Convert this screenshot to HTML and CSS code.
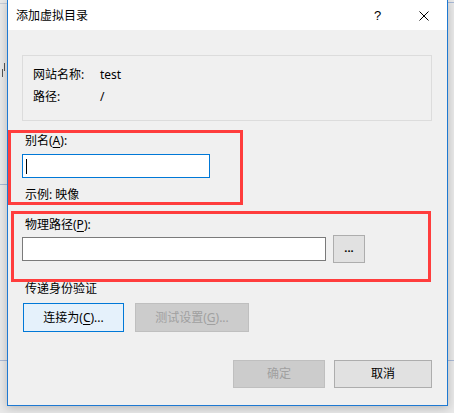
FILE: index.html
```html
<!DOCTYPE html>
<html lang="zh-CN">
<head>
<meta charset="utf-8">
<title>添加虚拟目录</title>
<link rel="stylesheet" href="styles.css">
</head>
<body>
<div class="desktop">
  <div class="bg-line bg-l1"></div>
  <div class="bg-line bg-l2"></div>
  <div class="bg-line bg-l3"></div>
  <div class="bg-line bg-r1"></div>
  <div class="bg-line bg-r2"></div>
  <div class="bg-mark"></div>

  <div class="dialog">
    <div class="titlebar">
      <span class="title">添加虚拟目录</span>
      <span class="help">?</span>
      <svg class="close" width="10" height="10" viewBox="0 0 10 10">
        <path d="M0.5 0.5 L9.5 9.5 M9.5 0.5 L0.5 9.5" stroke="#000" stroke-width="1" fill="none"/>
      </svg>
    </div>
    <div class="content">
      <div class="group">
        <div class="info-row"><span class="info-label">网站名称:</span><span class="info-value">test</span></div>
        <div class="info-row"><span class="info-label">路径:</span><span class="info-value">/</span></div>
      </div>

      <div class="label alias-label">别名(<u>A</u>):</div>
      <div class="textbox focused"><span class="caret"></span></div>
      <div class="label example">示例: 映像</div>

      <div class="label path-label">物理路径(<u>P</u>):</div>
      <div class="path-row">
        <div class="textbox path-box"></div>
        <div class="btn browse">...</div>
      </div>

      <div class="label auth-label">传递身份验证</div>
      <div class="auth-row">
        <div class="btn btn-connect">连接为(<u>C</u>)...</div>
        <div class="btn disabled btn-test">测试设置(<u>G</u>)...</div>
      </div>

      <div class="footer">
        <div class="btn disabled btn-ok">确定</div>
        <div class="btn btn-cancel">取消</div>
      </div>

      <div class="mark mark-1"></div>
      <div class="mark mark-2"></div>
    </div>
  </div>
</div>
</body>
</html>
```

FILE: styles.css
```css
* { box-sizing: border-box; }

html, body {
  margin: 0;
  padding: 0;
  width: 454px;
  height: 413px;
  overflow: hidden;
}

body {
  background: #e9e9e9;
  font-family: "Noto Sans", "Noto Sans CJK SC", sans-serif;
  font-size: 12px;
  color: #000;
}

.desktop {
  position: relative;
  width: 454px;
  height: 413px;
}

.bg-line {
  position: absolute;
  height: 1px;
  background: #a9b9d6;
}
.bg-l1 { left: 0; width: 7px; top: 3px; background: #c5ccd8; }
.bg-l2 { left: 0; width: 7px; top: 184px; }
.bg-l3 { left: 0; width: 7px; top: 360px; }
.bg-r1 { left: 447px; width: 7px; top: 2px; }
.bg-r2 { left: 447px; width: 7px; top: 360px; }
.bg-mark {
  position: absolute;
  left: 4px;
  top: 63px;
  width: 1px;
  height: 8px;
  background: #555;
  box-shadow: -2px 6px 0 0 #555;
}

.dialog {
  position: absolute;
  left: 7px;
  top: -1px;
  width: 441px;
  height: 407px;
  border: 1px solid #1e79d2;
  background: #f0f0f0;
  box-shadow: 0 2px 9px rgba(0, 0, 0, 0.22);
  display: flex;
  flex-direction: column;
}

.titlebar {
  height: 30px;
  flex: none;
  background: #fff;
  display: flex;
  align-items: center;
  padding-left: 8px;
  padding-top: 1px;
}
.title {
  font-size: 12px;
  line-height: 16px;
}
.help {
  margin-left: auto;
  font-size: 13px;
  line-height: 16px;
  width: 6px;
  margin-right: 39px;
  font-family: "Liberation Sans", sans-serif;
}
.close {
  display: block;
  margin-right: 18px;
}

.content {
  position: relative;
  flex: 1;
  padding-left: 14px;
  display: flex;
  flex-direction: column;
  align-items: flex-start;
}

.group {
  margin-top: 25px;
  width: 410px;
  height: 66px;
  border: 1px solid #dcdcdc;
  padding: 8px 10px 0 10px;
}
.info-row {
  display: flex;
  height: 22px;
  line-height: 22px;
}
.info-label { width: 67px; }
.info-value { }

.label {
  line-height: 20px;
  height: 20px;
  padding-left: 3px;
}
.label u { text-decoration-thickness: 1px; text-underline-offset: 2px; }
.btn u { text-decoration-thickness: 1px; text-underline-offset: 2px; }

.alias-label { margin-top: 10px; }
.textbox {
  height: 24px;
  background: #fff;
  border: 1px solid #7a7a7a;
}
.focused {
  margin-top: 3px;
  width: 188px;
  border-color: #0078d7;
  position: relative;
}
.caret {
  display: block;
  width: 1px;
  height: 15px;
  background: #000;
  margin: 4px 0 0 3px;
}
.example { margin-top: 7px; }
.path-label { margin-top: 10px; }

.path-row {
  display: flex;
  align-items: center;
  height: 28px;
}
.path-box { width: 304px; }

.btn {
  display: flex;
  align-items: center;
  justify-content: center;
  background: #e1e1e1;
  border: 1px solid #adadad;
  line-height: 16px;
}
.browse {
  width: 32px;
  height: 28px;
  margin-left: 7px;
  font-weight: bold;
  font-size: 11px;
  padding-bottom: 2px;
}
.disabled {
  background: #cccccc;
  border-color: #bfbfbf;
  color: #a0a0a0;
}

.auth-label { margin-top: 16px; }
.auth-row {
  display: flex;
  margin-top: 4px;
  margin-left: 1px;
  gap: 11px;
}
.btn-connect {
  width: 101px;
  height: 29px;
  background: #e5f1fb;
  border-color: #0078d7;
}
.btn-test {
  width: 114px;
  height: 29px;
}

.footer {
  display: flex;
  gap: 9px;
  margin-top: 28px;
  margin-left: 211px;
}
.btn-ok { width: 92px; height: 28px; }
.btn-cancel { width: 98px; height: 28px; }

.mark {
  position: absolute;
  border: 3px solid #ff3d3d;
}
.mark-1 {
  left: 0;
  top: 100px;
  width: 235px;
  height: 75px;
}
.mark-2 {
  left: 3px;
  top: 181px;
  width: 420px;
  height: 71px;
}
```
